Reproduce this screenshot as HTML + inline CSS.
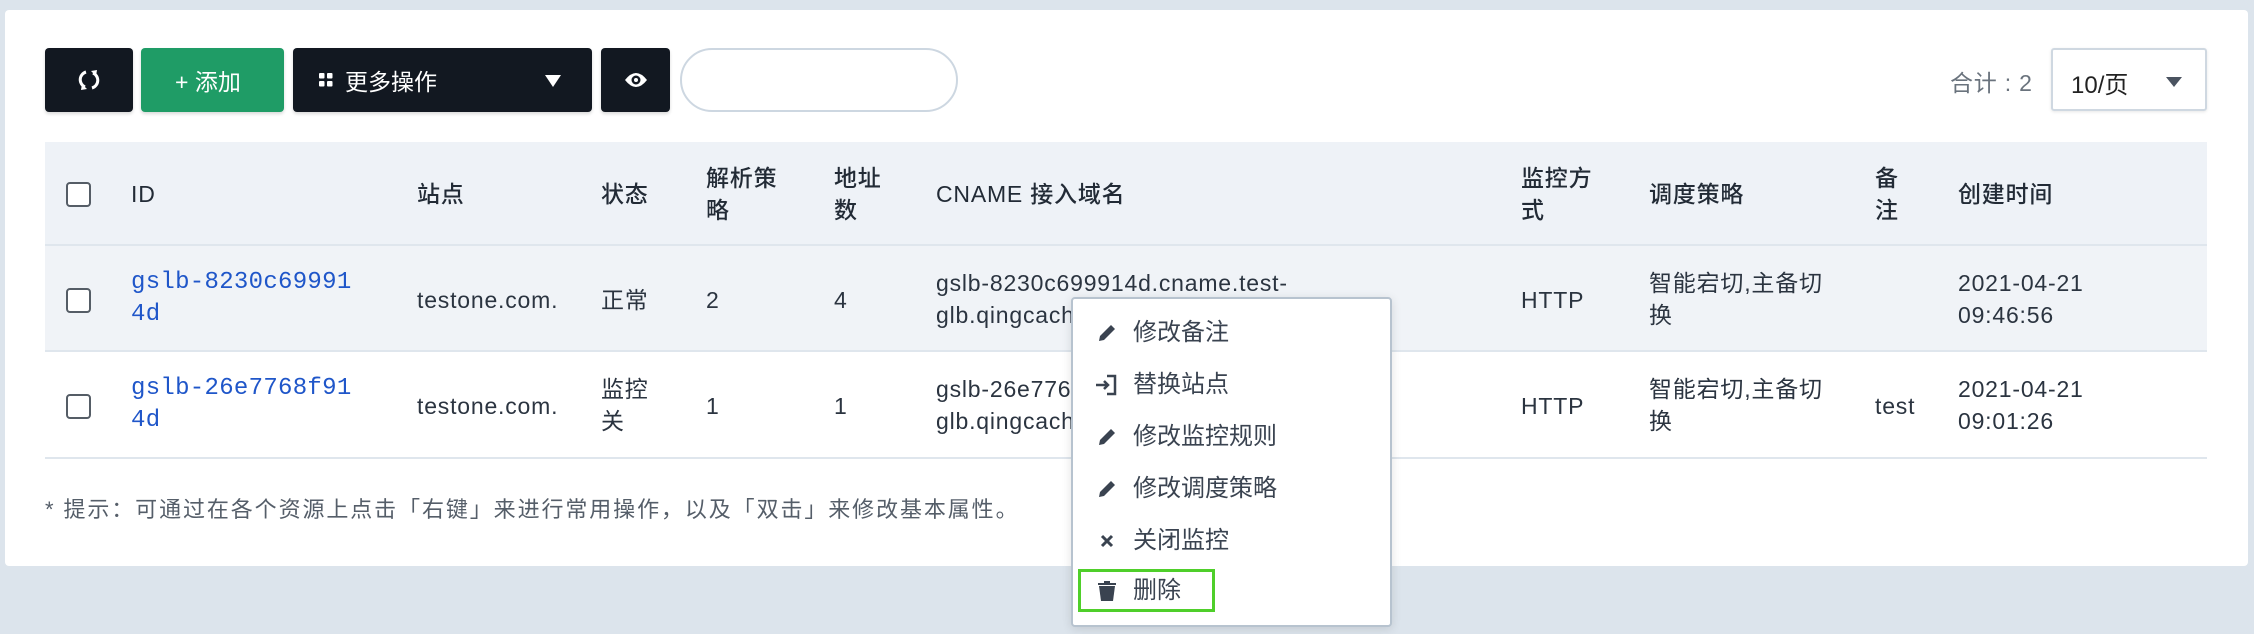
<!DOCTYPE html>
<html><head><meta charset="utf-8"><style>
*{margin:0;padding:0;box-sizing:border-box}
body{width:2254px;height:634px;background:#dce4ec;position:relative;overflow:hidden;font-family:"Liberation Sans","Noto Sans CJK SC",sans-serif;color:#2b3440;font-size:23px;letter-spacing:0.8px}
.a{position:absolute}
.panel{left:5px;top:10px;width:2243px;height:556px;background:#fff;border-radius:4px}
.btn{position:absolute;top:48px;height:64px;background:#121821;border-radius:4px;color:#fff;box-shadow:0 2px 3px rgba(0,0,0,.15);letter-spacing:0}
.th{position:absolute;line-height:32px;font-weight:500;color:#222b36}
.td{position:absolute;line-height:32px}
.cb{position:absolute;left:66px;width:25px;height:25px;border:2px solid #555d66;border-radius:4px;background:#fff}
.id{font-family:"Liberation Mono",monospace;color:#1f56c9;font-size:24px;letter-spacing:0.3px}
.menu{left:1071px;top:297px;width:321px;height:330px;background:#fff;border:2px solid #b7c3cf;border-radius:4px;box-shadow:0 2px 10px rgba(0,0,0,.12)}
.mi{position:absolute;left:60px;font-size:24px;color:#3a4350;line-height:30px;letter-spacing:0}
.ic{position:absolute;left:20px;width:28px;height:28px}
</style></head><body>
<div class="a panel"></div>
<div class="btn" style="left:45px;width:88px"><svg class="a" style="left:33px;top:21px" width="22" height="22" viewBox="0 0 22 22"><path d="M8 3 A8 8 0 0 0 7 18" fill="none" stroke="#fff" stroke-width="3"/><path d="M14 19 A8 8 0 0 0 15 4" fill="none" stroke="#fff" stroke-width="3"/><path d="M4 15 L9 20 L3 21Z M18 7 L13 2 L19 1Z" fill="#fff"/></svg></div>
<div class="btn" style="left:141px;width:143px;background:#1f9c66"><span class="a" style="left:34px;top:15px;font-size:23px">+ 添加</span></div>
<div class="btn" style="left:293px;width:299px"><svg class="a" style="left:26px;top:25px" width="14" height="14"><rect x="0" y="0" width="5.5" height="5.5" rx="1" fill="#fff"/><rect x="8" y="0" width="5.5" height="5.5" rx="1" fill="#fff"/><rect x="0" y="8" width="5.5" height="5.5" rx="1" fill="#fff"/><rect x="8" y="8" width="5.5" height="5.5" rx="1" fill="#fff"/></svg><span class="a" style="left:52px;top:15px;font-size:23px">更多操作</span><svg class="a" style="left:252px;top:27px" width="16" height="12"><path d="M0 0H16L8 12Z" fill="#fff"/></svg></div>
<div class="btn" style="left:601px;width:69px"><svg class="a" style="left:23px;top:22px" width="24" height="20" viewBox="0 0 24 20"><path d="M1 10 Q12 -4 23 10 Q12 24 1 10Z" fill="#fff"/><circle cx="12" cy="10" r="4.5" fill="#121821"/><circle cx="12" cy="10" r="2" fill="#fff"/></svg></div>
<div class="a" style="left:680px;top:48px;width:278px;height:64px;border:2px solid #cdd7e1;border-radius:32px"></div>
<div class="a" style="left:1950px;top:64px;color:#6a737d;font-size:23px">合计 : 2</div>
<div class="a" style="left:2051px;top:48px;width:156px;height:63px;border:2px solid #cfd8e1;border-radius:3px;box-shadow:0 1px 3px rgba(0,0,0,.1)"><span class="a" style="left:18px;top:15px;font-size:24px;color:#222;letter-spacing:0">10/页</span><svg class="a" style="left:113px;top:27px" width="16" height="10"><path d="M0 0H16L8 10Z" fill="#4a5360"/></svg></div>
<div class="a" style="left:45px;top:142px;width:2162px;height:104px;background:#eef2f7;border-bottom:2px solid #dfe6ed"></div>
<div class="a" style="left:45px;top:246px;width:2162px;height:106px;background:#f0f3f7;border-bottom:2px solid #dfe6ed"></div>
<div class="a" style="left:45px;top:352px;width:2162px;height:107px;background:#fff;border-bottom:2px solid #dfe6ed"></div>
<div class="cb" style="top:182px"></div><div class="cb" style="top:288px"></div><div class="cb" style="top:394px"></div>
<div class="th" style="left:131px;top:178px">ID</div>
<div class="th" style="left:417px;top:178px">站点</div>
<div class="th" style="left:601px;top:178px">状态</div>
<div class="th" style="left:706px;top:162px">解析策<br>略</div>
<div class="th" style="left:834px;top:162px">地址<br>数</div>
<div class="th" style="left:936px;top:178px">CNAME 接入域名</div>
<div class="th" style="left:1521px;top:162px">监控方<br>式</div>
<div class="th" style="left:1649px;top:178px">调度策略</div>
<div class="th" style="left:1875px;top:162px">备<br>注</div>
<div class="th" style="left:1958px;top:178px">创建时间</div>
<div class="td id" style="left:131px;top:267px">gslb-8230c69991<br>4d</div>
<div class="td" style="left:417px;top:284px">testone.com.</div>
<div class="td" style="left:601px;top:284px">正常</div>
<div class="td" style="left:706px;top:284px">2</div>
<div class="td" style="left:834px;top:284px">4</div>
<div class="td" style="left:936px;top:267px">gslb-8230c699914d.cname.test-<br>glb.qingcache.com</div>
<div class="td" style="left:1521px;top:284px">HTTP</div>
<div class="td" style="left:1649px;top:267px">智能宕切,主备切<br>换</div>
<div class="td" style="left:1958px;top:267px">2021-04-21<br>09:46:56</div>
<div class="td id" style="left:131px;top:373px">gslb-26e7768f91<br>4d</div>
<div class="td" style="left:417px;top:390px">testone.com.</div>
<div class="td" style="left:601px;top:373px">监控<br>关</div>
<div class="td" style="left:706px;top:390px">1</div>
<div class="td" style="left:834px;top:390px">1</div>
<div class="td" style="left:936px;top:373px">gslb-26e7768f914d.cname.test-<br>glb.qingcache.com</div>
<div class="td" style="left:1521px;top:390px">HTTP</div>
<div class="td" style="left:1649px;top:373px">智能宕切,主备切<br>换</div>
<div class="td" style="left:1875px;top:390px">test</div>
<div class="td" style="left:1958px;top:373px">2021-04-21<br>09:01:26</div>
<div class="a" style="left:45px;top:492px;font-size:22px;letter-spacing:1.9px;color:#555e69">* 提示：可通过在各个资源上点击「右键」来进行常用操作，以及「双击」来修改基本属性。</div>
<div class="a menu">
<svg class="ic" style="top:20px" viewBox="0 0 28 28"><path d="M6 22 L7 17 L18 6 L22 10 L11 21Z" fill="#3a4350"/></svg><div class="mi" style="top:19px">修改备注</div>
<svg class="ic" style="top:72px" viewBox="0 0 28 28"><path d="M3 14H15M11 10L15 14L11 18M14 5H22V23H14" fill="none" stroke="#3a4350" stroke-width="2.5"/></svg><div class="mi" style="top:71px">替换站点</div>
<svg class="ic" style="top:124px" viewBox="0 0 28 28"><path d="M6 22 L7 17 L18 6 L22 10 L11 21Z" fill="#3a4350"/></svg><div class="mi" style="top:123px">修改监控规则</div>
<svg class="ic" style="top:176px" viewBox="0 0 28 28"><path d="M6 22 L7 17 L18 6 L22 10 L11 21Z" fill="#3a4350"/></svg><div class="mi" style="top:175px">修改调度策略</div>
<svg class="ic" style="top:228px" viewBox="0 0 28 28"><path d="M9 9L19 19M19 9L9 19" stroke="#3a4350" stroke-width="3"/></svg><div class="mi" style="top:227px">关闭监控</div>
<div class="a" style="left:5px;top:270px;width:137px;height:43px;border:3px solid #4fcf2a"></div>
<svg class="ic" style="top:278px" viewBox="0 0 28 28"><path d="M6 9H22L20 24H8Z" fill="#3a4350"/><rect x="5" y="6" width="18" height="2" fill="#3a4350"/><rect x="11" y="4" width="6" height="2" fill="#3a4350"/></svg><div class="mi" style="top:277px">删除</div>
</div>
</body></html>
